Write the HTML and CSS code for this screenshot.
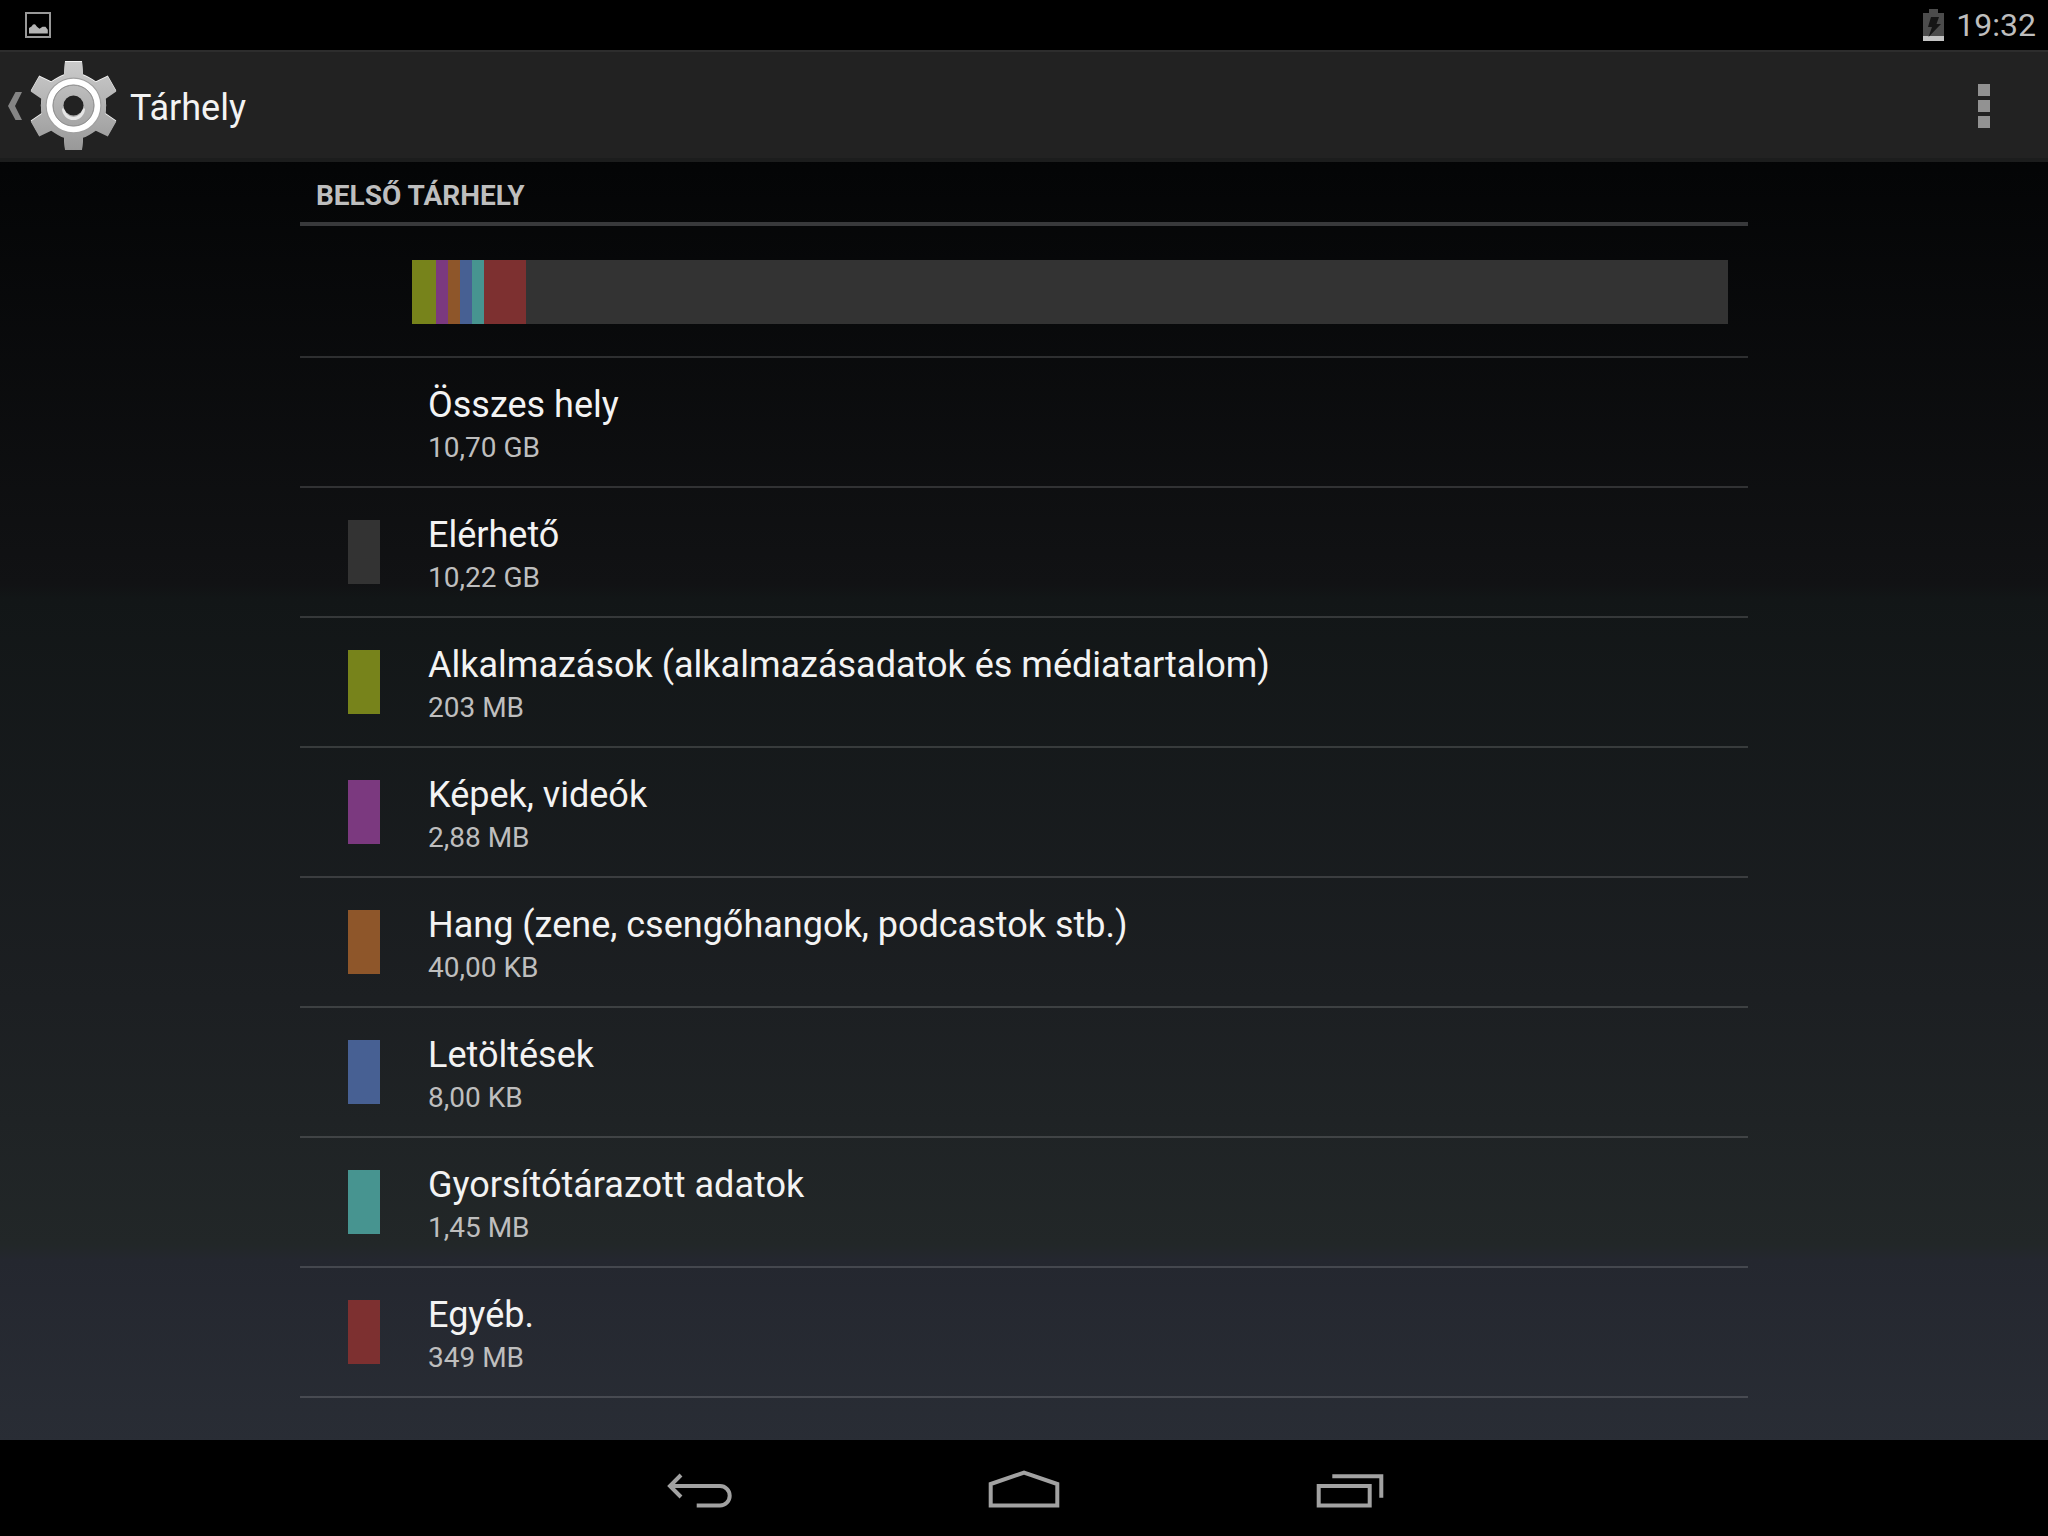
FILE: index.html
```
<!DOCTYPE html>
<html lang="hu">
<head>
    <meta charset="UTF-8">
    <meta name="viewport" content="width=device-width, initial-scale=1.0">
    <title>Tárhely</title>
    <link rel="stylesheet" href="styles.css">
</head>
<body>
    <div class="status-bar">
        <svg class="status-icon" width="28" height="28" viewBox="0 0 28 28" aria-hidden="true">
            <rect x="2" y="2" width="24" height="24" fill="none" stroke="#999" stroke-width="2"/>
            <path d="M5 22.500V17l2.500-1.500L9 13.500l2-.2 2 2.500 2.500 2 3-2h3l1.500 2 .8 1v3.700z" fill="#b4b4b4"/>
        </svg>
        <div class="status-right">
            <svg width="21" height="32" viewBox="0 0 21 32" aria-hidden="true">
                <path d="M6 0h9v4h6v23H0V4h6z" fill="#4c4c4c"/>
                <path d="M0 27h21v5H0z" fill="#c4c4c4"/>
                <path d="M8 8h8l-2.500 7H18L5.500 28 9 18H5z" fill="#161616"/>
            </svg>
            <time class="clock">19:32</time>
        </div>
    </div>

    <header class="action-bar">
        <a href="#" class="up-link" aria-label="Vissza a beállításokhoz">
            <svg class="up-arrow" width="14" height="28" viewBox="0 0 14 28" aria-hidden="true">
                <path d="M7.500 0H14L7 14l7 14H7.500L0 14z" fill="#858585"/>
            </svg>
            <svg class="gear" width="88" height="92" viewBox="-43 -45 88 92" aria-hidden="true">
                <defs>
                    <linearGradient id="metal" x1="0" y1="-44" x2="0" y2="44" gradientUnits="userSpaceOnUse">
                        <stop offset="0" stop-color="#cbcbcb"/>
                        <stop offset="1" stop-color="#989898"/>
                    </linearGradient>
                    <path id="gear-body" d="M-8.500-44.500H8.500L9.500-31.300Q14-30 22.300-24.200L34.300-29.900 42.800-15.100 31.900-7.400Q33.500 0 31.900 7.400L42.800 15.100 34.300 29.900 22.300 24.200Q14 30 9.500 31.300L8.500 43.500H-8.500L-9.500 31.300Q-14 30-22.300 24.200L-34.300 29.900-42.800 15.100-31.900 7.400Q-33.500 0-31.900-7.400L-42.800-15.100-34.300-29.900-22.300-24.200Q-14-30-9.500-31.300z"/>
                    <mask id="gear-hole">
                        <rect x="-44" y="-46" width="90" height="94" fill="#fff"/>
                        <circle r="10" fill="#000"/>
                    </mask>
                </defs>
                <g transform="translate(0.500 0.500)" mask="url(#gear-hole)">
                    <use href="#gear-body" fill="#f4f4f4"/>
                    <use href="#gear-body" y="1" fill="url(#metal)"/>
                    <circle r="28" fill="#a0a0a0"/>
                    <circle r="20" fill="url(#metal)"/>
                    <circle r="23.800" fill="none" stroke="#fff" stroke-width="6"/>
                    <circle r="20.500" fill="none" stroke="#929292"/>
                    <path d="M-10 3A10 10 0 0 0 10 3" fill="none" stroke="#e6e6e6" stroke-width="3"/>
                </g>
            </svg>
        </a>
        <h1 class="title">Tárhely</h1>
        <button type="button" class="overflow-btn" aria-label="További lehetőségek">
            <span class="dot"></span>
            <span class="dot"></span>
            <span class="dot"></span>
        </button>
    </header>

    <main class="content">
        <h2 class="section-header">Belső tárhely</h2>
        <div class="usage">
            <div class="usage-bar">
                <span class="apps" style="flex-grow: 24"></span>
                <span class="pictures" style="flex-grow: 12"></span>
                <span class="audio" style="flex-grow: 12"></span>
                <span class="downloads" style="flex-grow: 12"></span>
                <span class="cache" style="flex-grow: 12"></span>
                <span class="misc" style="flex-grow: 42"></span>
                <span class="available" style="flex-grow: 1202"></span>
            </div>
        </div>
        <ul class="storage-list">
            <li class="row">
                <span class="swatch"></span>
                <div class="row-text">
                    <p class="name">Összes hely</p>
                    <p class="size">10,70 GB</p>
                </div>
            </li>
            <li class="row">
                <span class="swatch available"></span>
                <div class="row-text">
                    <p class="name">Elérhető</p>
                    <p class="size">10,22 GB</p>
                </div>
            </li>
            <li class="row">
                <span class="swatch apps"></span>
                <div class="row-text">
                    <p class="name">Alkalmazások (alkalmazásadatok és médiatartalom)</p>
                    <p class="size">203 MB</p>
                </div>
            </li>
            <li class="row">
                <span class="swatch pictures"></span>
                <div class="row-text">
                    <p class="name">Képek, videók</p>
                    <p class="size">2,88 MB</p>
                </div>
            </li>
            <li class="row">
                <span class="swatch audio"></span>
                <div class="row-text">
                    <p class="name">Hang (zene, csengőhangok, podcastok stb.)</p>
                    <p class="size">40,00 KB</p>
                </div>
            </li>
            <li class="row">
                <span class="swatch downloads"></span>
                <div class="row-text">
                    <p class="name">Letöltések</p>
                    <p class="size">8,00 KB</p>
                </div>
            </li>
            <li class="row">
                <span class="swatch cache"></span>
                <div class="row-text">
                    <p class="name">Gyorsítótárazott adatok</p>
                    <p class="size">1,45 MB</p>
                </div>
            </li>
            <li class="row">
                <span class="swatch misc"></span>
                <div class="row-text">
                    <p class="name">Egyéb.</p>
                    <p class="size">349 MB</p>
                </div>
            </li>
        </ul>
    </main>

    <nav class="nav-bar">
        <button type="button" class="nav-btn" aria-label="Vissza">
            <svg width="96" height="96" viewBox="0 0 96 96" aria-hidden="true">
                <path d="M29 35L18 46l11 11M18 46h50a9.700 9.700 0 0 1 0 19.400H44.700"/>
            </svg>
        </button>
        <button type="button" class="nav-btn" aria-label="Kezdőképernyő">
            <svg width="96" height="96" viewBox="0 0 96 96" aria-hidden="true">
                <path d="M14.700 65.400V44L48 32.700 81.300 44v21.400z"/>
            </svg>
        </button>
        <button type="button" class="nav-btn" aria-label="Legutóbbi alkalmazások">
            <svg width="96" height="96" viewBox="0 0 96 96" aria-hidden="true">
                <path d="M18.700 46h51v19.600h-51zM32.300 36.300h49v21.400"/>
            </svg>
        </button>
    </nav>
</body>
</html>
```

FILE: styles.css
```
* {
    margin: 0;
    padding: 0;
    box-sizing: border-box;
}

body {
    background: linear-gradient(180deg, #000000 0%, #040506 11%, #111214 38%, #121617 39%, #1c1f22 65%, #222728 81%, #24272f 82%, #292d35 94%);
    color: #f3f3f3;
    font-family: Roboto, 'Noto Sans', sans-serif;
    min-height: 100vh;
    display: flex;
    flex-direction: column;
}

button {
    background: none;
    border: none;
    cursor: pointer;
}

/* Status bar */
.status-bar {
    height: 50px;
    padding: 0 12px 0 24px;
    background: #000000;
    display: flex;
    align-items: center;
    justify-content: space-between;
}

.status-right {
    display: flex;
    align-items: center;
    gap: 12px;
}

.clock {
    color: #bebebe;
    font-size: 32px;
    line-height: 48px;
}

/* Action bar */
.action-bar {
    height: 112px;
    padding: 0 8px;
    background: #222222;
    box-shadow: inset 0 2px #2d2d2d, inset 0 -4px #1c1d1d;
    display: flex;
    align-items: center;
}

.up-link {
    display: flex;
    align-items: center;
    gap: 8px;
}

.title {
    margin-left: 12px;
    padding-top: 4px;
    font-size: 36px;
    font-weight: 400;
    line-height: 48px;
}

.overflow-btn {
    width: 112px;
    height: 100%;
    margin-left: auto;
    display: flex;
    flex-direction: column;
    align-items: center;
    justify-content: center;
    gap: 4px;
}

.dot {
    width: 12px;
    height: 12px;
    background: #929292;
}

/* Storage list */
.content {
    flex: 1;
    margin: 0 300px;
}

.section-header {
    padding: 16px 16px 8px;
    border-bottom: 4px solid #38393b;
    color: #bebebe;
    font-size: 28px;
    font-weight: 700;
    line-height: 36px;
    text-transform: uppercase;
}

.usage {
    padding: 34px 20px 32px 112px;
    border-bottom: 2px solid rgba(255, 255, 255, 0.15);
}

.usage-bar {
    height: 64px;
    display: flex;
}

.storage-list {
    list-style: none;
}

.row {
    min-height: 130px;
    padding: 0 48px;
    border-bottom: 2px solid rgba(255, 255, 255, 0.15);
    display: flex;
    align-items: center;
    gap: 48px;
}

.row-text {
    padding-top: 2px;
}

.swatch {
    flex: none;
    width: 32px;
    height: 64px;
}

.name {
    font-size: 36px;
    line-height: 50px;
}

.size {
    color: #bebebe;
    font-size: 28px;
    line-height: 36px;
}

.available {
    background: #333333;
}

.apps {
    background: #77831b;
}

.pictures {
    background: #7b397f;
}

.audio {
    background: #8e562a;
}

.downloads {
    background: #476093;
}

.cache {
    background: #479490;
}

.misc {
    background: #7d3030;
}

/* Navigation bar */
.nav-bar {
    height: 96px;
    background: #000000;
    display: flex;
    justify-content: center;
}

.nav-btn {
    width: 324px;
    height: 96px;
}

.nav-btn svg {
    display: block;
    margin: 0 auto;
    fill: none;
    stroke: #a2a2a2;
    stroke-width: 4;
}
```
